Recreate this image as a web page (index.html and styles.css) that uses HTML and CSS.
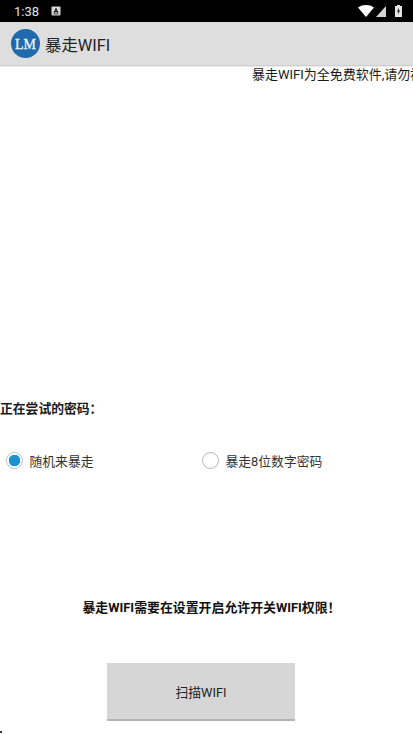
FILE: index.html
```html
<!DOCTYPE html>
<html lang="zh">
<head>
<meta charset="utf-8">
<title>暴走WIFI</title>
<link rel="stylesheet" href="styles.css">
</head>
<body>
<div class="status">
  <span class="time">1:38</span>
  <svg class="notif" width="10" height="10" viewBox="0 0 10 10"><rect x="0.5" y="0.5" width="9" height="9" rx="1" fill="#d8d8d8"/><path d="M3 7 L5 2.5 L7 7 M3.8 5.6 H6.2" stroke="#000" stroke-width="1" fill="none"/><rect x="2.5" y="7.6" width="5" height="0.7" fill="#000"/></svg>
  <span class="spacer"></span>
  <svg class="wifi" width="16" height="12" viewBox="0 0 16 12"><path d="M0 2.5 C4.5 -0.8 11.5 -0.8 16 2.5 L8 12 Z" fill="#fff"/></svg>
  <svg class="signal" width="10" height="11" viewBox="0 0 10 11"><path d="M10 0 V11 H0 Z" fill="#d4d4d4"/></svg>
  <svg class="battery" width="7" height="12" viewBox="0 0 7 12"><path d="M2 0 H5 V1 H7 V12 H0 V1 H2 Z" fill="#e6e6e6"/><path d="M4 2.5 L2 6.5 H3.4 L3 9.5 L5 5.5 H3.6 Z" fill="#000"/></svg>
</div>
<header class="appbar">
  <svg class="logo" width="29" height="29" viewBox="0 0 29 29"><circle cx="14.5" cy="14.5" r="14.5" fill="#1f69ad"/><text x="14.5" y="19.5" text-anchor="middle" class="logo-text">LM</text></svg>
  <span class="title">暴走WIFI</span>
</header>
<main class="content">
  <div class="marquee">暴走WIFI为全免费软件,请勿被骗上当受骗</div>
  <div class="trying">正在尝试的密码：</div>
  <div class="radios">
    <label class="radio-item"><span class="radio checked"></span><span>随机来暴走</span></label>
    <label class="radio-item"><span class="radio"></span><span>暴走8位数字密码</span></label>
  </div>
  <div class="notice">暴走WIFI需要在设置开启允许开关WIFI权限！</div>
  <button class="scan">扫描WIFI</button>
</main>
<span class="speck"></span>
</body>
</html>
```
FILE: styles.css
```css
* { box-sizing: border-box; }
html, body { margin: 0; padding: 0; }
body {
  position: relative;
  width: 413px;
  height: 734px;
  overflow: hidden;
  background: #fff;
  color: #1a1a1a;
  font-family: Roboto, "Noto Sans CJK SC", sans-serif;
}
.status {
  height: 22px;
  background: #000;
  display: flex;
  align-items: center;
  padding: 0 11px 0 14px;
  color: #e4e4e4;
  font-size: 13px;
}
.time { width: 37px; }
.notif { display: block; }
.spacer { flex: 1; }
.wifi { margin-right: 2px; }
.signal { margin-right: 9px; }
.appbar {
  height: 44px;
  background: #dedede;
  display: flex;
  align-items: center;
  padding: 0 0 0 11px;
  gap: 5px;
  border-bottom: 1px solid #cfcfcf;
  box-shadow: 0 1px 1px rgba(0,0,0,.08);
}
.logo { display: block; flex: none; }
.logo-text {
  font-family: "Liberation Serif", serif;
  font-size: 14px;
  font-weight: 400;
  fill: #eef4fa;
  stroke: #eef4fa;
  stroke-width: .3px;
}
.title { font-size: 16.4px; color: #222; }
.content { display: flex; flex-direction: column; }
.marquee {
  padding: 0 0 0 252px;
  height: 17px;
  line-height: 17px;
  white-space: nowrap;
  overflow: hidden;
  font-size: 13px;
}
.trying {
  margin-top: 317px;
  height: 18px;
  line-height: 18px;
  font-size: 12.8px;
  font-weight: 700;
}
.radios {
  margin-top: 32px;
  display: grid;
  grid-template-columns: 196px 1fr;
  height: 20px;
}
.radio-item {
  display: flex;
  align-items: center;
  gap: 6.5px;
  padding-left: 6px;
  font-size: 12.8px;
  color: #333;
}
.radio {
  width: 17px;
  height: 17px;
  border-radius: 50%;
  border: 1.5px solid #b4b4b4;
  flex: none;
}
.radio.checked {
  border-color: #a9c4d6;
  background: radial-gradient(circle, #1c93d1 0 5.5px, #fff 6px);
}
.notice {
  margin-top: 129px;
  padding-left: 10px;
  height: 18px;
  line-height: 18px;
  text-align: center;
  font-size: 12.9px;
  font-weight: 700;
  color: #111;
}
.scan {
  align-self: flex-start;
  margin: 46px 0 0 107px;
  width: 188px;
  height: 58px;
  background: #d6d6d6;
  border: 0;
  border-bottom: 2px solid #b4b4b4;
  color: #222;
  font-family: inherit;
  font-size: 12.8px;
  padding: 0;
}
.speck {
  position: absolute;
  left: 0;
  top: 731px;
  width: 2px;
  height: 2px;
  background: #333;
}
```
